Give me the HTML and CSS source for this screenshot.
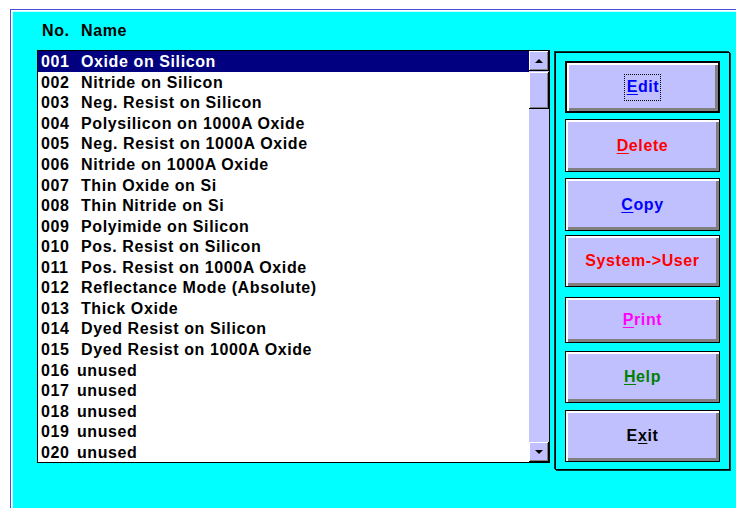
FILE: index.html
```html
<!DOCTYPE html>
<html lang="en">
<head>
<meta charset="utf-8">
<title>Film Library</title>
<link rel="stylesheet" href="styles.css">
</head>
<body>
<div class="window">
  <div class="header"><span class="no">No.</span>Name</div>
  <div class="content">
    <div class="listbox">
      <ul class="rows">
        <li class="row selected"><span class="no">001</span>Oxide on Silicon</li>
        <li class="row"><span class="no">002</span>Nitride on Silicon</li>
        <li class="row"><span class="no">003</span>Neg. Resist on Silicon</li>
        <li class="row"><span class="no">004</span>Polysilicon on 1000A Oxide</li>
        <li class="row"><span class="no">005</span>Neg. Resist on 1000A Oxide</li>
        <li class="row"><span class="no">006</span>Nitride on 1000A Oxide</li>
        <li class="row"><span class="no">007</span>Thin Oxide on Si</li>
        <li class="row"><span class="no">008</span>Thin Nitride on Si</li>
        <li class="row"><span class="no">009</span>Polyimide on Silicon</li>
        <li class="row"><span class="no">010</span>Pos. Resist on Silicon</li>
        <li class="row"><span class="no">011</span>Pos. Resist on 1000A Oxide</li>
        <li class="row"><span class="no">012</span>Reflectance Mode (Absolute)</li>
        <li class="row"><span class="no">013</span>Thick Oxide</li>
        <li class="row"><span class="no">014</span>Dyed Resist on Silicon</li>
        <li class="row"><span class="no">015</span>Dyed Resist on 1000A Oxide</li>
        <li class="row unused"><span class="no">016</span>unused</li>
        <li class="row unused"><span class="no">017</span>unused</li>
        <li class="row unused"><span class="no">018</span>unused</li>
        <li class="row unused"><span class="no">019</span>unused</li>
        <li class="row unused"><span class="no">020</span>unused</li>
      </ul>
      <div class="scrollbar">
        <div class="sb-btn"><span class="arrow up"></span></div>
        <div class="thumb"></div>
        <div class="track"></div>
        <div class="sb-btn"><span class="arrow down"></span></div>
      </div>
    </div>
    <div class="panel">
      <button class="btn default blue"><span class="focus"><u>E</u>dit</span></button>
      <button class="btn tall red"><u>D</u>elete</button>
      <button class="btn tall blue"><u>C</u>opy</button>
      <button class="btn red sys">System-&gt;User</button>
      <button class="btn magenta print"><u>P</u>rint</button>
      <button class="btn green help"><u>H</u>elp</button>
      <button class="btn black exit">E<u>x</u>it</button>
    </div>
  </div>
</div>
</body>
</html>
```

FILE: styles.css
```css
html, body {
  margin: 0;
  height: 100%;
  overflow: hidden;
  background: #ffffff;
}

body {
  font-family: "Liberation Sans", Arial, sans-serif;
  font-weight: bold;
  font-size: 16px;
  letter-spacing: 0.6px;
  color: #000;
}

/* dialog body, running past the right and bottom edges */
.window {
  box-sizing: border-box;
  margin: 9px 0 0 10px;
  width: 740px;
  height: 520px;
  padding: 12px 0 0 26px;
  background: #00ffff;
  border-top: 1px solid #4c4cdc;
  border-left: 1px solid #4c4cdc;
  box-shadow: inset 1px 1px 0 #ffffff, inset 2px 2px 0 #c8ffff;
}

.header {
  height: 18px;
  line-height: 18px;
  padding-left: 5px;
  margin-bottom: 10px;
}

.header .no {
  display: inline-block;
  width: 39px;
}

.content {
  display: flex;
  align-items: flex-start;
  gap: 5px;
}

/* list box */
.listbox {
  box-sizing: border-box;
  width: 513px;
  height: 413px;
  display: flex;
  background: #ffffff;
  border: 1px solid #000;
}

.rows {
  flex: 1;
  margin: 0;
  padding: 0;
  list-style: none;
  display: grid;
  grid-template-rows: repeat(20, 1fr);
}

.row {
  padding: 1px 0 0 3px;
  line-height: 19px;
  white-space: nowrap;
  display: flex;
  align-items: center;
}

.row .no {
  display: inline-block;
  width: 40px;
}

.row.unused .no {
  width: 36px;
}

.row.selected {
  background: #000080;
  color: #ffffff;
}

/* vertical scroll bar */
.scrollbar {
  width: 20px;
  display: flex;
  flex-direction: column;
  background: #c4c4ff;
}

.sb-btn,
.thumb {
  box-sizing: border-box;
  background: #c0c0ff;
  box-shadow: inset 1px 1px 0 #ffffff, inset -1px -1px 0 #808080;
  border-right: 1px solid #000;
  border-bottom: 1px solid #000;
}

.sb-btn {
  height: 20px;
  display: flex;
  align-items: center;
  justify-content: center;
}

.thumb {
  height: 37px;
  margin-top: 1px;
}

.track {
  flex: 1;
}

.arrow {
  width: 0;
  height: 0;
  border-left: 4px solid transparent;
  border-right: 4px solid transparent;
}

.arrow.up {
  border-bottom: 4px solid #000;
}

.arrow.down {
  border-top: 4px solid #000;
}

/* command buttons */
.panel {
  box-sizing: border-box;
  width: 175px;
  height: 418px;
  margin-top: 2px;
  padding: 8px 9px 0 9px;
  border: 1px solid #000;
  box-shadow: 1px 1px 0 #003c3c, -1px -1px 0 #003c3c;
  display: flex;
  flex-direction: column;
  gap: 6px;
}

.btn {
  box-sizing: border-box;
  width: 155px;
  height: 52px;
  padding: 0;
  margin: 0;
  font: inherit;
  letter-spacing: 0.6px;
  background: #c0c0ff;
  border: 1px solid #000;
  box-shadow: inset 2px 2px 0 #ffffff, inset -3px -3px 0 #808080;
  display: flex;
  align-items: center;
  justify-content: center;
}

.btn u {
  text-decoration-thickness: 1px;
  text-underline-offset: 2px;
}

.btn.default {
  border-width: 2px;
}

.btn .focus {
  outline: 1px dotted #000;
  padding: 3px 1px 4px 2px;
}

.btn.tall { height: 53px; }
.btn.sys { margin-top: -2px; }
.btn.print { margin-top: 4px; height: 46px; }
.btn.help { margin-top: 2px; }
.btn.exit { margin-top: 1px; }

.blue { color: #0000ff; }
.red { color: #ff0000; }
.magenta { color: #ff00ff; }
.green { color: #008000; }
.black { color: #000000; }
```
